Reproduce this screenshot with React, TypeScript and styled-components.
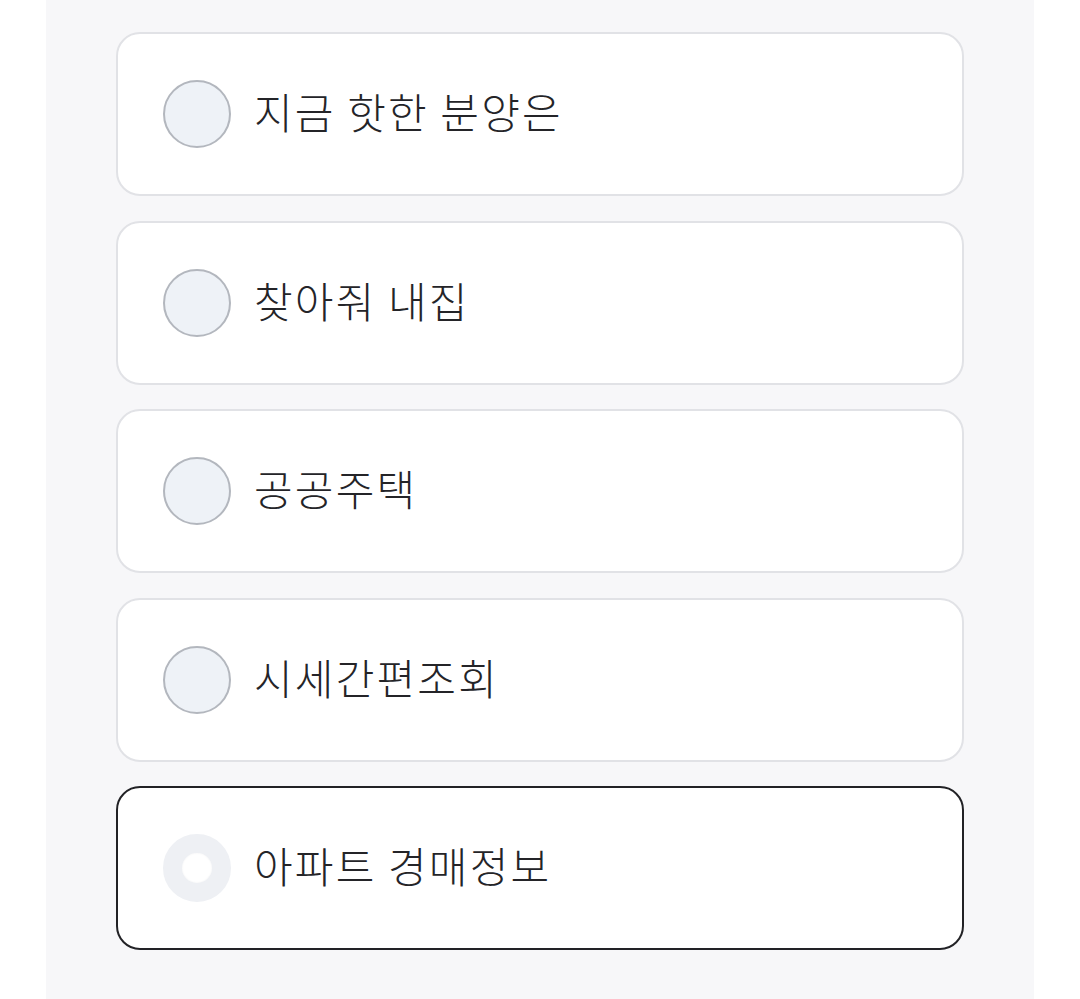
import React, { useState } from 'react';
import styled, { createGlobalStyle } from 'styled-components';

const GlobalStyle = createGlobalStyle`
  html, body {
    margin: 0;
    padding: 0;
    background: #ffffff;
  }
  body {
    font-family: "Noto Sans CJK KR", "Noto Sans", sans-serif;
  }
`;

const options = ['지금 핫한 분양은', '찾아줘 내집', '공공주택', '시세간편조회', '아파트 경매정보'];

const App: React.FC = () => {
  const [selected, setSelected] = useState(4);

  return (
    <>
      <GlobalStyle />
      <Panel>
        <List>
          {options.map((label, i) => (
            <Card key={label} $active={selected === i} onClick={() => setSelected(i)}>
              <Radio $active={selected === i} />
              <Label>{label}</Label>
            </Card>
          ))}
        </List>
      </Panel>
    </>
  );
};

export default App;

const Panel = styled.main`
  max-width: 988px;
  min-height: 999px;
  margin: 0 auto;
  box-sizing: border-box;
  padding: 32px 70px;
  background: #f7f7f9;
`;

const List = styled.div`
  display: flex;
  flex-direction: column;
  gap: 24.5px;
`;

const Card = styled.button<{ $active: boolean }>`
  display: flex;
  align-items: center;
  gap: 23px;
  height: 164px;
  box-sizing: border-box;
  padding: 0 45px 6px;
  background: #ffffff;
  border: 2px solid ${({ $active }) => ($active ? '#222226' : '#e1e2e6')};
  border-radius: 24px;
  cursor: pointer;
  text-align: left;
`;

const Radio = styled.span<{ $active: boolean }>`
  flex: none;
  width: 68px;
  height: 68px;
  margin-top: 6px;
  box-sizing: border-box;
  border-radius: 50%;
  background: ${({ $active }) => ($active ? '#ffffff' : '#eef2f7')};
  border: ${({ $active }) => ($active ? '19px solid #eef0f4' : '2px solid #b3b7be')};
  box-shadow: ${({ $active }) => ($active ? 'inset 0 0 2px rgba(0, 0, 0, 0.06)' : 'none')};
`;

const Label = styled.span`
  font-family: "Noto Sans CJK KR", "Noto Sans", sans-serif;
  font-size: 42px;
  font-weight: 300;
  color: #242428;
  letter-spacing: 2.2px;
  line-height: 1;
`;
